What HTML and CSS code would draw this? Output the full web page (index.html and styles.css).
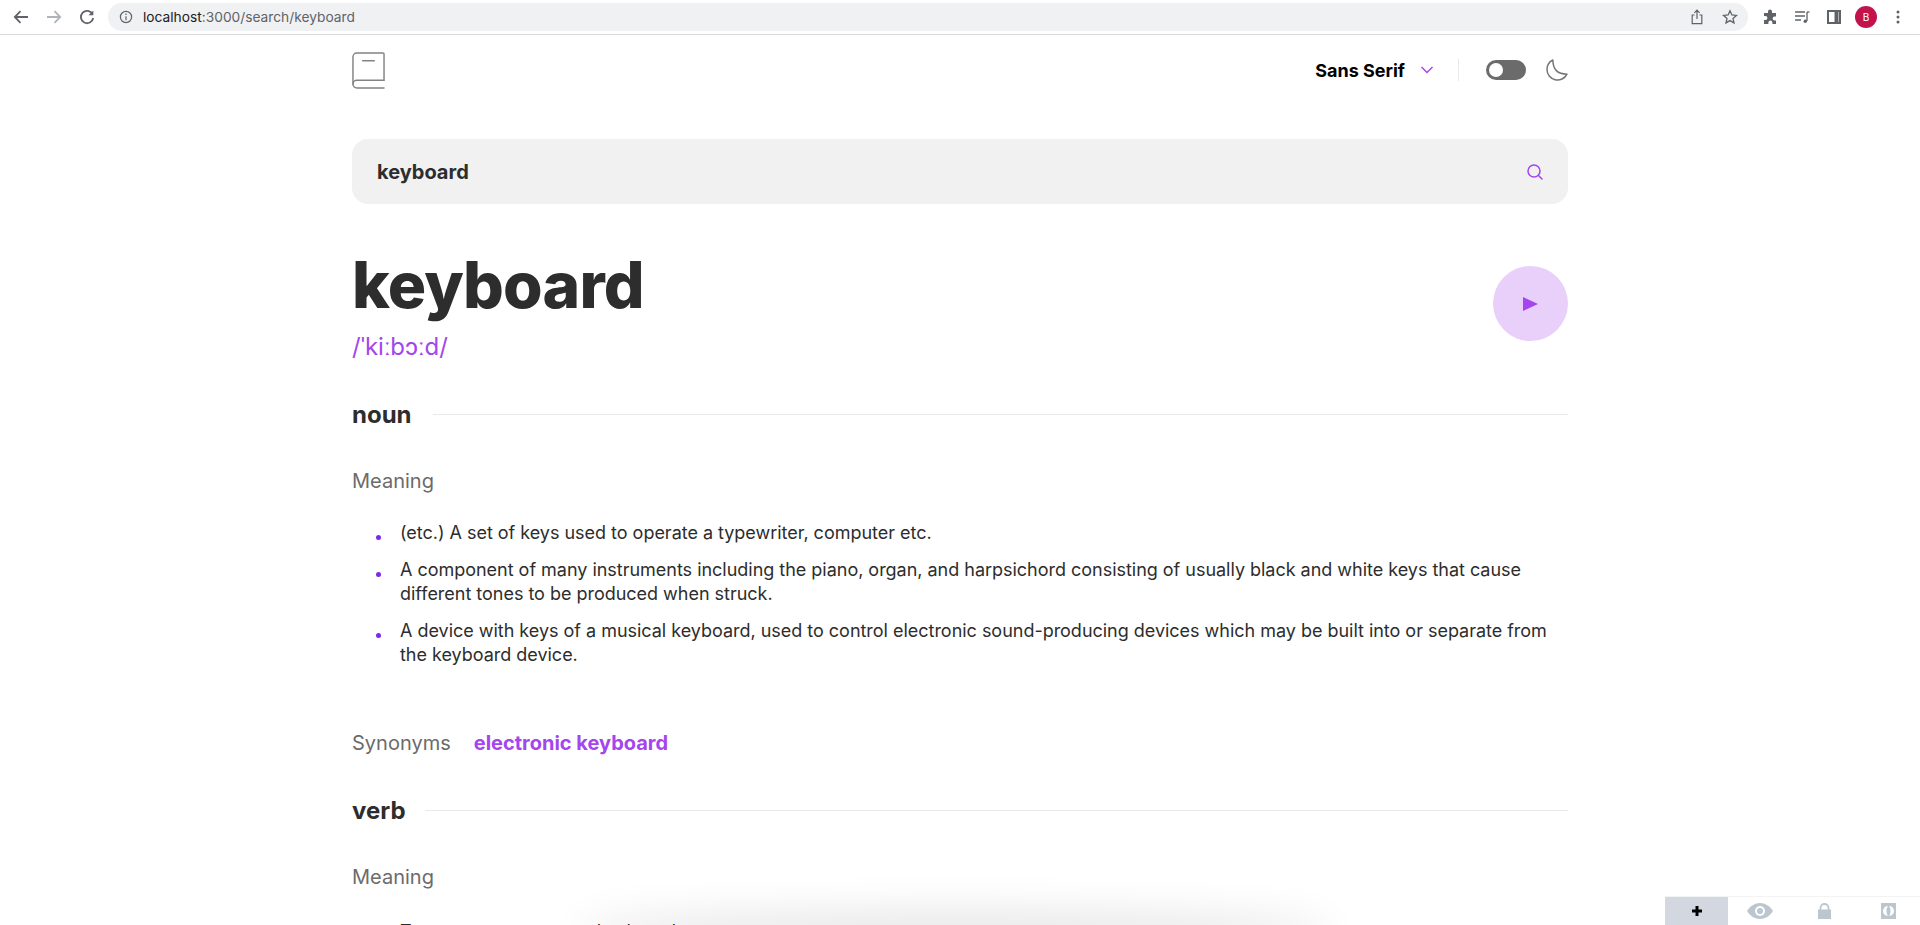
FILE: index.html
```html
<!DOCTYPE html>
<html>
	<head>
		<meta charset="utf-8">
		<title>keyboard</title>
		<link rel="stylesheet" href="styles.css">
	</head>
	<body>
		<div class="chrome">
			<span class="nav"><svg width="18" height="18" viewBox="0 0 18 18" fill="none" stroke="#5f6368" stroke-width="1.8"><path d="M16 9H3M8.5 3.200 2.800 9l5.700 5.800"/></svg></span>
			<span class="nav"><svg width="18" height="18" viewBox="0 0 18 18" fill="none" stroke="#b0b3b8" stroke-width="1.8"><path d="M2 9h13M9.500 3.200 15.200 9l-5.700 5.800"/></svg></span>
			<span class="nav"><svg width="18" height="18" viewBox="0 0 18 18" fill="none" stroke="#5f6368" stroke-width="1.8"><path d="M14.600 6.200A6.200 6.200 0 1 0 15.200 10"/><path d="M15.300 2.400v4.800h-4.800z" fill="#5f6368" stroke="none"/></svg></span>
			<div class="omnibox">
				<svg width="14" height="14" viewBox="0 0 14 14" fill="none" stroke="#5f6368" stroke-width="1.2"><circle cx="7" cy="7" r="5.600"/><path d="M7 6.200v4M7 3.600v1.300"/></svg>
				<span class="url"><b>localhost</b>:3000/search/keyboard</span>
				<svg class="omni-end" width="14" height="16" viewBox="0 0 14 16" fill="none" stroke="#5f6368" stroke-width="1.2"><path d="M4.500 6H2.200v8.600h9.600V6H9.500M7 10V1.400M4.400 3.800 7 1.200l2.600 2.600"/></svg>
				<svg width="16" height="16" viewBox="0 0 16 16" fill="none" stroke="#5f6368" stroke-width="1.3"><path d="m8 1.800 1.900 4.200 4.500.4-3.400 3 1 4.500L8 11.600l-4 2.300 1-4.500-3.400-3 4.500-.4z"/></svg>
			</div>
			<div class="tools">
				<span><svg width="16" height="16" viewBox="0 0 16 16" fill="#5f6368"><path d="M6 2.500a2 2 0 0 1 4 0V4h4v3.600h-1.400a2 2 0 0 0 0 4H14V15H10.400v-1.400a2 2 0 0 0-4 0V15H2v-4h1.400a2 2 0 0 0 0-4H2V4h4z"/></svg></span>
				<span><svg width="16" height="16" viewBox="0 0 16 16" fill="none" stroke="#5f6368" stroke-width="1.300"><path d="M1 3h10M1 7h10M1 11h6M13 3v9"/><circle cx="11.300" cy="12.300" r="1.700" fill="#5f6368" stroke="none"/><path d="M13 3h2.500"/></svg></span>
				<span><svg width="14" height="14" viewBox="0 0 14 14" fill="none" stroke="#5f6368" stroke-width="2"><rect x="1" y="1" width="12" height="12"/><path d="M9.500 1v12" stroke-width="4"/></svg></span>
				<span><i class="avatar">B</i></span>
				<span><svg width="4" height="14" viewBox="0 0 4 14" fill="#5f6368"><circle cx="2" cy="2" r="1.500"/><circle cx="2" cy="7" r="1.500"/><circle cx="2" cy="12" r="1.500"/></svg></span>
			</div>
		</div>

		<div class="page">
			<header class="top">
				<svg class="logo" width="33" height="37" viewBox="0 0 34 38" fill="none" stroke="#838383" stroke-width="1.500" stroke-linecap="round" stroke-linejoin="round"><path d="M1 33V5a4 4 0 0 1 4-4h26.800A1.200 1.200 0 0 1 33 2.200V29"/><path d="M5 29h28M5 37h28M5 37a4 4 0 0 1 0-8M1 33"/><path d="M11 9h12"/></svg>
				<div class="top-right">
					<span class="font-name">Sans Serif</span>
					<svg class="chev" width="14" height="8" viewBox="0 0 14 8" fill="none" stroke="#a445ed" stroke-width="1.500"><path d="m1.500 1 5.500 5.500L12.500 1"/></svg>
					<span class="divider"></span>
					<span class="switch"><i></i></span>
					<svg width="22" height="22" viewBox="0 0 22 22" fill="none" stroke="#757575" stroke-width="1.500" stroke-linecap="round" stroke-linejoin="round"><path d="M1 10.449a10.544 10.544 0 0 0 19.993 4.686C11.544 15.135 6.858 10.448 6.858 1A10.545 10.545 0 0 0 1 10.449z"/></svg>
				</div>
			</header>

			<div class="search">
				<span>keyboard</span>
				<svg width="16" height="16" viewBox="0 0 16 16" fill="none" stroke="#a445ed" stroke-width="1.500" stroke-linecap="round"><circle cx="7" cy="7" r="6"/><path d="m11.500 11.500 3.500 3.500"/></svg>
			</div>

			<section class="word-head">
				<div>
					<h1>keyboard</h1>
					<p class="phonetic">/ˈkiːbɔːd/</p>
				</div>
				<span class="play"><svg width="15" height="14" viewBox="0 0 15 14" fill="#a445ed"><path d="M0 0l15 7-15 7z"/></svg></span>
			</section>

			<div class="pos"><h2>noun</h2><span class="line"></span></div>
			<h3 class="label">Meaning</h3>
			<ul class="defs">
				<li>(etc.) A set of keys used to operate a typewriter, computer etc.</li>
				<li>A component of many instruments including the piano, organ, and harpsichord consisting of usually black and white keys that cause different tones to be produced when struck.</li>
				<li>A device with keys of a musical keyboard, used to control electronic sound-producing devices which may be built into or separate from the keyboard device.</li>
			</ul>
			<div class="syn"><span>Synonyms</span><a>electronic keyboard</a></div>

			<div class="pos verb"><h2>verb</h2><span class="line"></span></div>
			<h3 class="label">Meaning</h3>
			<ul class="defs defs-last">
				<li>To type on a computer keyboard.</li>
			</ul>
		</div>

		<div class="blur"></div>
		<div class="devbar">
			<span class="active"><svg width="10" height="10" viewBox="0 0 10 10" fill="#000"><path d="M3.500 0h3v3.500H10v3H6.500V10h-3V6.500H0v-3h3.500z"/></svg></span>
			<span><svg width="26" height="16" viewBox="0 0 26 16"><path d="M0 8c3-5 8-8 13-8s10 3 13 8c-3 5-8 8-13 8S3 13 0 8z" fill="#bcc6cf"/><circle cx="13" cy="8" r="5" fill="#fff"/><circle cx="13" cy="8" r="3" fill="#bcc6cf"/></svg></span>
			<span><svg width="13" height="16" viewBox="0 0 13 16"><path d="M2.500 7V5a4 4 0 0 1 8 0v2" fill="none" stroke="#bcc6cf" stroke-width="1.800"/><rect y="6.500" width="13" height="9.500" fill="#bcc6cf"/></svg></span>
			<span><svg width="15" height="16" viewBox="0 0 15 16"><rect width="15" height="16" fill="#bcc6cf"/><path d="M7 3a5 5 0 0 0 0 10c-2-2.500-2-7.500 0-10z" fill="#fff"/><path d="M8 3c2 2.500 2 7.500 0 10a5 5 0 0 0 0-10z" fill="#fff"/></svg></span>
		</div>
	</body>
</html>
```

FILE: styles.css
```css
html,body{
	margin: 0;
	padding: 0;
	height: 100%;
	overflow: hidden;
	background-color: #fff;
}
body{
	font-family: Inter, "Liberation Sans", sans-serif;
	color: #2d2d2d;
	position: relative;
}
h1,h2,h3,p,ul{
	margin: 0;
	padding: 0;
}

/* browser bar */
.chrome{
	height: 35px;
	box-sizing: border-box;
	border-bottom: 1px solid #d9dadc;
	display: flex;
	align-items: center;
	padding-left: 4px;
}
.nav{
	width: 33px;
	display: flex;
	justify-content: center;
	flex: none;
}
.omnibox{
	width: 1640px;
	height: 28px;
	margin-left: 5px;
	background-color: #f0f1f3;
	border-radius: 14px;
	display: flex;
	align-items: center;
	padding: 0 10px 0 11px;
	box-sizing: border-box;
	flex: none;
}
.url{
	font-size: 13.75px;
	color: #5f6368;
	margin-left: 10px;
	flex: 1;
}
.url b{
	font-weight: 400;
	color: #202124;
}
.omni-end{
	margin-right: 18px;
}
.tools{
	display: flex;
	align-items: center;
	margin-left: 6px;
}
.tools span{
	width: 32px;
	display: flex;
	justify-content: center;
	align-items: center;
}
.avatar{
	width: 22px;
	height: 22px;
	border-radius: 50%;
	background-color: #c2134d;
	color: #fff;
	font-size: 10px;
	font-style: normal;
	display: flex;
	align-items: center;
	justify-content: center;
}

/* page */
.page{
	width: 1216px;
	margin: 0 auto;
}
.top{
	display: flex;
	justify-content: space-between;
	align-items: center;
	height: 38px;
	margin-top: 16px;
}
.top-right{
	display: flex;
	align-items: center;
}
.font-name{
	font-size: 18px;
	font-weight: 700;
	color: #000;
}
.chev{
	margin-left: 15px;
}
.divider{
	width: 1px;
	height: 22px;
	background-color: #e9e9e9;
	margin: 0 27px 0 24px;
}
.switch{
	width: 40px;
	height: 20px;
	border-radius: 10px;
	background-color: #6b6b6b;
	margin-right: 20px;
	display: flex;
	align-items: center;
	padding-left: 3px;
	box-sizing: border-box;
}
.switch i{
	width: 14px;
	height: 14px;
	border-radius: 50%;
	background-color: #fff;
}
.search{
	margin-top: 50px;
	height: 65px;
	background-color: #f1f1f1;
	border-radius: 16px;
	display: flex;
	align-items: center;
	justify-content: space-between;
	padding: 0 25px;
	font-size: 20px;
	font-weight: 700;
}
.word-head{
	margin-top: 42px;
	display: flex;
	justify-content: space-between;
	align-items: center;
}
h1{
	font-size: 64px;
	line-height: 77px;
	font-weight: 800;
	letter-spacing: -0.8px;
}
.phonetic{
	font-size: 24px;
	line-height: 29px;
	color: #a445ed;
	margin-top: 9px;
}
.play{
	width: 75px;
	height: 75px;
	border-radius: 50%;
	background-color: #e8d0fa;
	display: flex;
	align-items: center;
	justify-content: center;
}
.pos{
	display: flex;
	align-items: center;
	margin-top: 39px;
}
.pos h2{
	font-size: 24px;
	line-height: 29px;
	font-weight: 700;
}
.line{
	flex: 1;
	height: 1px;
	background-color: #e9e9e9;
	margin-left: 21px;
}
.label{
	font-size: 20px;
	line-height: 24px;
	font-weight: 400;
	color: #6b6b6b;
	margin-top: 40px;
}
.defs{
	margin-top: 28px;
	padding-left: 48px;
	color: #2d2d2d;
	font-size: 18px;
	line-height: 24px;
	letter-spacing: -0.02px;
	list-style: none;
}
.defs li{
	position: relative;
	margin-bottom: 13px;
}
.defs li::before{
	content: "";
	position: absolute;
	left: -24px;
	top: 14px;
	width: 5px;
	height: 5px;
	border-radius: 50%;
	background-color: #7c2ae8;
}
.defs-last{
	margin-top: 31px;
}
.syn{
	margin-top: 64px;
	font-size: 20px;
	line-height: 24px;
	color: #6b6b6b;
	display: flex;
	gap: 23px;
}
.syn a{
	color: #a445ed;
	font-weight: 700;
}
.verb{
	margin-top: 41px;
}
.verb .line{
	margin-left: 19px;
}

/* floating bits at the bottom */
.blur{
	position: absolute;
	left: 590px;
	width: 730px;
	bottom: -14px;
	height: 14px;
	border-radius: 50%;
	box-shadow: 0 0 40px 12px rgba(0,0,0,0.11);
}
.devbar{
	position: absolute;
	right: 0;
	bottom: 0;
	width: 255px;
	height: 28px;
	display: flex;
	background-color: #fff;
	box-shadow: 0 -1px 0 #f2f3f5;
}
.devbar span{
	flex: 1;
	display: flex;
	align-items: center;
	justify-content: center;
}
.devbar .active{
	flex: none;
	width: 63px;
	background-color: #d3d8e0;
}
```
